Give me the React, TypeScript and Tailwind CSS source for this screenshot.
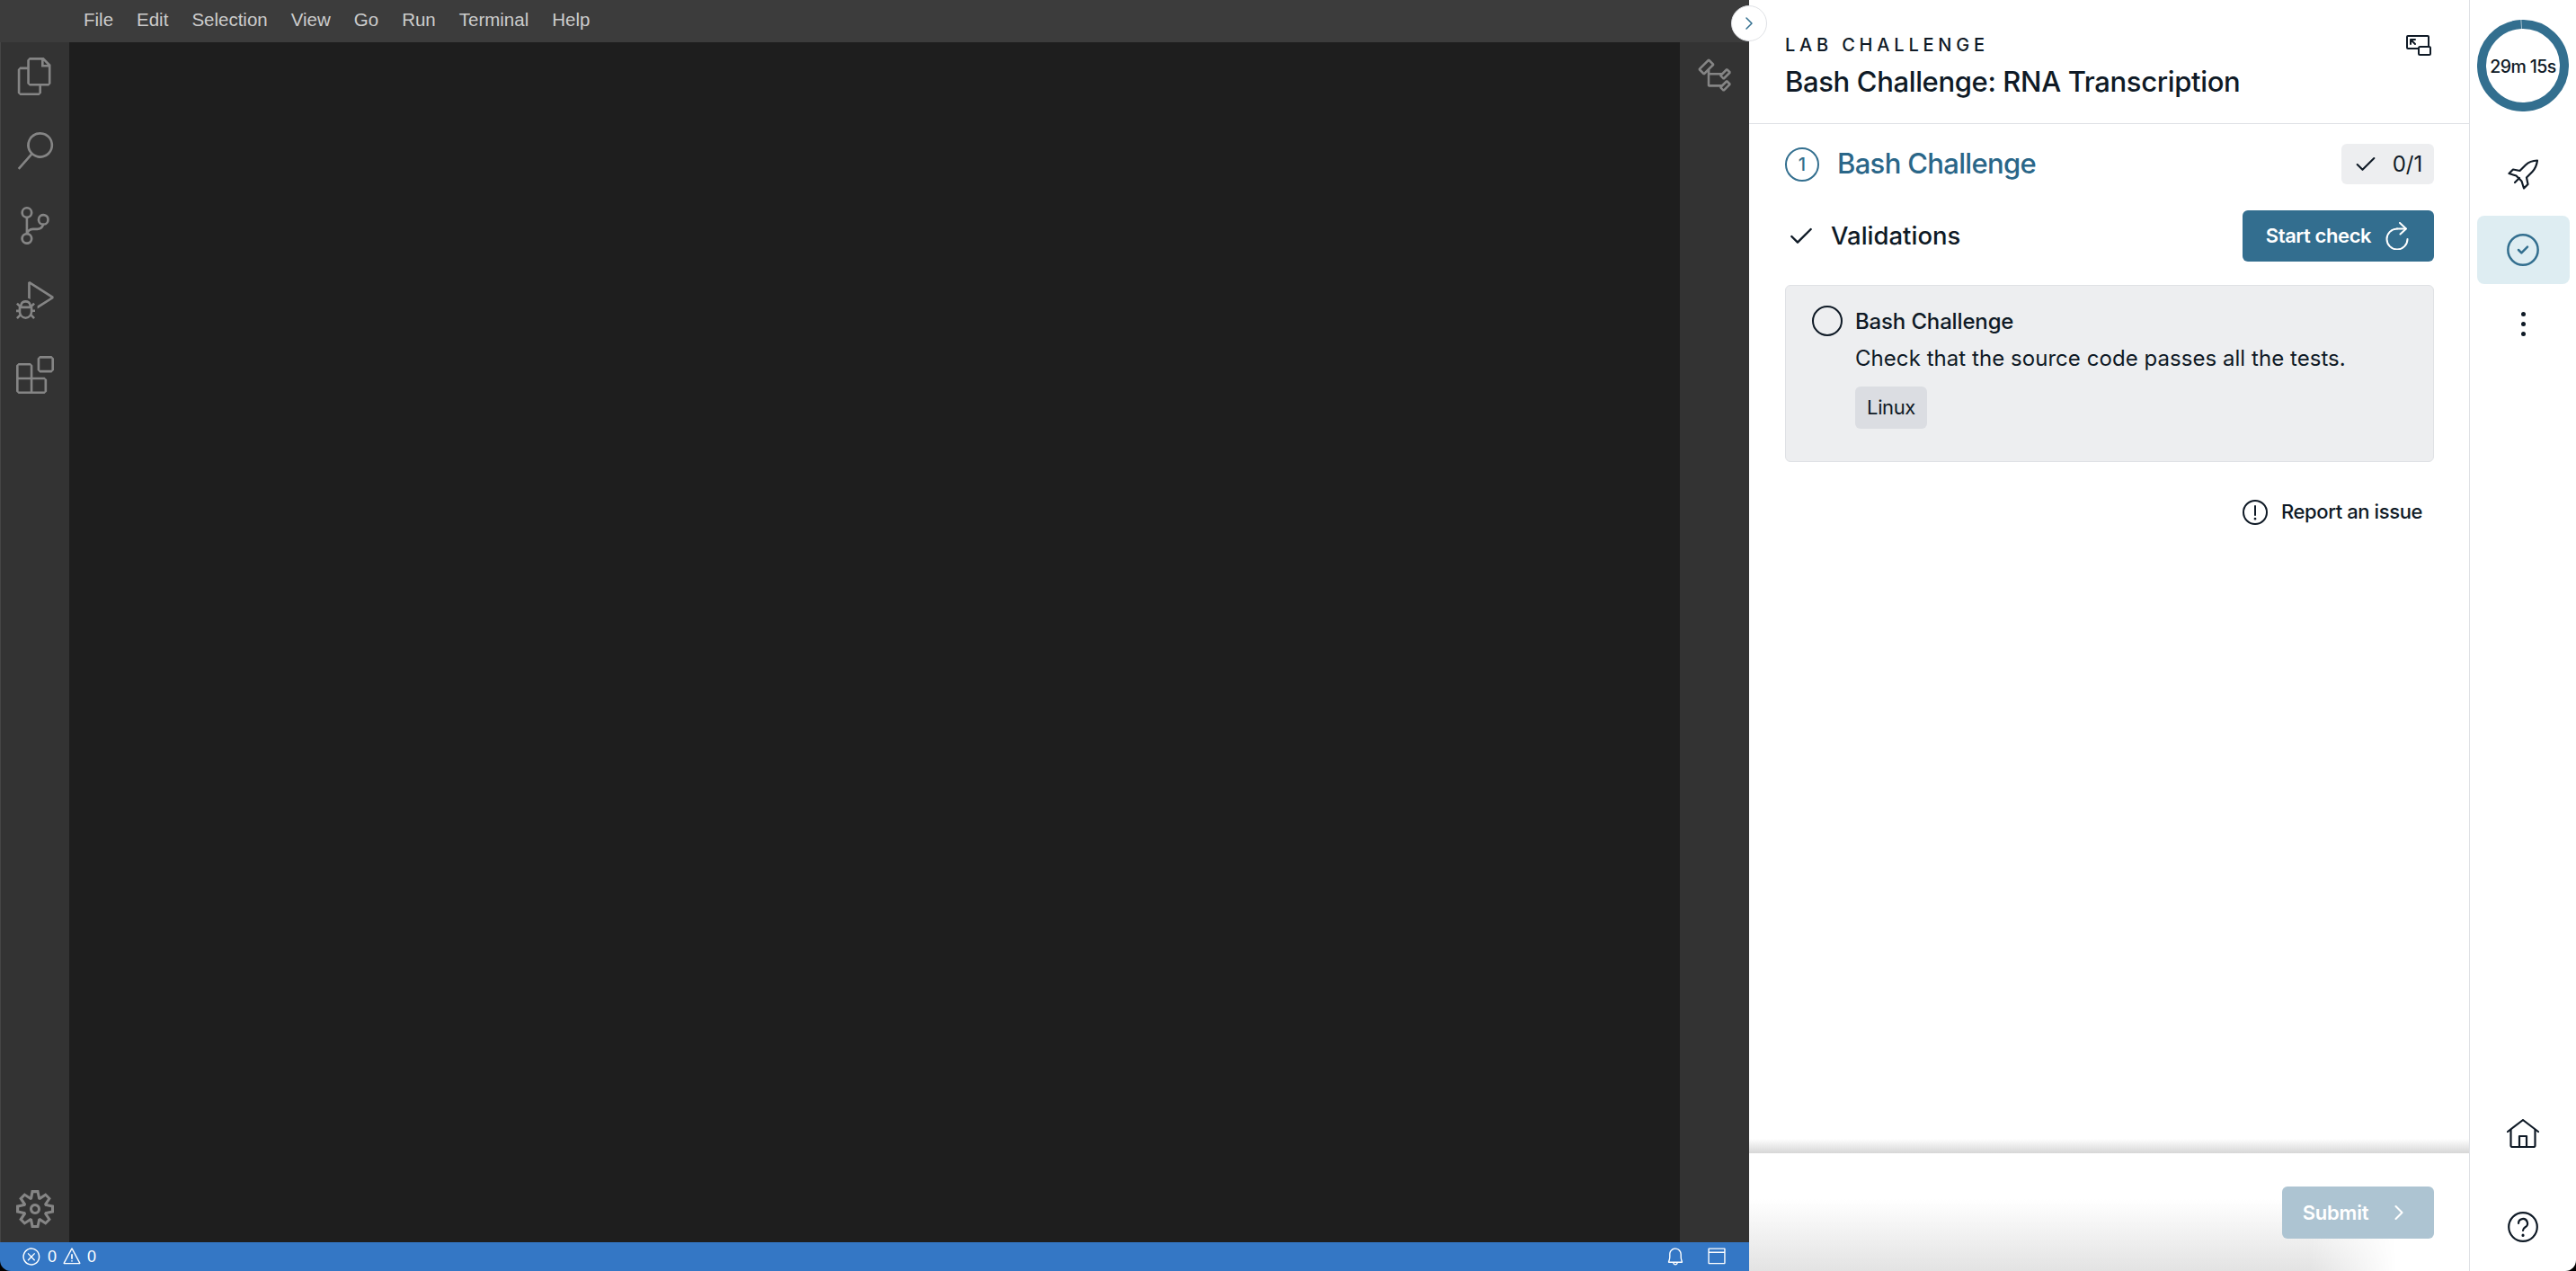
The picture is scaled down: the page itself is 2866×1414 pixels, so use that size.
import { Check, ChevronRight, CircleCheck } from "lucide-react";
import {
  VscBell,
  VscBrowser,
  VscDebugAlt,
  VscError,
  VscExtensions,
  VscFiles,
  VscSearch,
  VscSettingsGear,
  VscSourceControl,
  VscSymbolClass,
  VscWarning,
} from "react-icons/vsc";

const menuItems = ["File", "Edit", "Selection", "View", "Go", "Run", "Terminal", "Help"];

function ActivityBar() {
  return (
    <div className="flex w-[77px] shrink-0 flex-col items-center border-l border-[#454545] bg-[#333333] pb-[16px] pt-[17px] text-[#858585]">
      <div className="flex flex-col items-center gap-[41px]">
        <VscFiles size={42} />
        <VscSearch size={42} />
        <VscSourceControl size={42} />
        <VscDebugAlt size={42} />
        <VscExtensions size={42} />
      </div>
      <div className="mt-auto">
        <VscSettingsGear size={42} />
      </div>
    </div>
  );
}

function RestartIcon() {
  return (
    <svg width="26" height="31" viewBox="0 0 26 31" fill="none" stroke="currentColor" strokeWidth="2" strokeLinecap="round" strokeLinejoin="round">
      <path d="M13 7.5a11.5 11.5 0 1 0 11.5 11.5" />
      <path d="M13 7.5h9" />
      <path d="M16 1l7 6.5-6.5 6" />
    </svg>
  );
}

function ExpandIcon() {
  return (
    <svg width="28" height="23" viewBox="0 0 28 23" fill="none" stroke="#0f1a26" strokeWidth="2" strokeLinecap="round" strokeLinejoin="round">
      <path d="M14 15H2a1 1 0 0 1-1-1V2a1 1 0 0 1 1-1h22a1 1 0 0 1 1 1v10" />
      <rect x="14" y="13" width="13" height="9" rx="1.5" />
      <path d="M10 10L5 5M5 10V5h5" />
    </svg>
  );
}

function RocketIcon() {
  return (
    <svg width="34" height="34" viewBox="0 0 34 34" fill="none" stroke="#0f1a26" strokeWidth="2.2" strokeLinecap="round" strokeLinejoin="round">
      <path d="M33 1.5c-5.5.2-9.5 1.6-13 5L13.5 13 6 11.5 1.5 16l8 2.5 6 6 2.5 8 4.5-4.5-1.500-7.500 6.500-6.500c3.400-3.500 4.800-7.500 5.500-12.500z" />
      <path d="M8 26l5-5" />
    </svg>
  );
}

function HomeIcon() {
  return (
    <svg width="36" height="32" viewBox="0 0 36 32" fill="none" stroke="#0f1a26" strokeWidth="2.2" strokeLinecap="round" strokeLinejoin="round">
      <path d="M1 14L18 1l17 13" />
      <path d="M4.500 12v17.500a1.500 1.500 0 0 0 1.500 1.500h24a1.500 1.500 0 0 0 1.500-1.500V12" />
      <path d="M14 31V19h8v12" />
    </svg>
  );
}

function QuestionIcon() {
  return (
    <svg width="34" height="34" viewBox="0 0 34 34" fill="none" stroke="#0f1a26" strokeWidth="2.2" strokeLinecap="round" strokeLinejoin="round">
      <circle cx="17" cy="17" r="15.800" />
      <path d="M12 13a5 5 0 1 1 7.500 4.300c-1.600 1-2.500 1.900-2.500 3.700" />
      <path d="M17 26v.4" strokeWidth="3" />
    </svg>
  );
}

function ExclamationIcon() {
  return (
    <svg width="28" height="28" viewBox="0 0 28 28" fill="none" stroke="#0f1a26" strokeWidth="2" strokeLinecap="round">
      <circle cx="14" cy="14" r="13" />
      <path d="M14 7v10" />
      <path d="M14 21v.3" strokeWidth="2.600" />
    </svg>
  );
}

function TimerRing() {
  return (
    <div className="relative mt-[22px] flex h-[102px] w-[102px] items-center justify-center">
      <svg className="absolute inset-0" width="102" height="102" viewBox="0 0 102 102" fill="none">
        <circle cx="51" cy="51" r="46" stroke="#336f8f" strokeWidth="10" strokeDasharray="288 1.200" transform="rotate(-92 51 51)" />
      </svg>
      <span className="relative mt-[4px] text-[19.5px] font-medium tracking-[-0.6px] text-[#0f1a26]">29m 15s</span>
    </div>
  );
}

function Sidebar() {
  return (
    <div className="flex flex-1 flex-col items-center border-l border-[#dfe1e5] bg-white">
      <TimerRing />
      <div className="mt-[53px]">
        <RocketIcon />
      </div>
      <div className="mt-[29px] flex h-[76px] w-[103px] items-center justify-center rounded-[8px] bg-[#deedf2] text-[#336f8f]">
        <CircleCheck size={40} strokeWidth={1.500} />
      </div>
      <div className="mt-[31px] flex flex-col gap-[6px]">
        <span className="h-[5px] w-[5px] rounded-full bg-[#0f1a26]" />
        <span className="h-[5px] w-[5px] rounded-full bg-[#0f1a26]" />
        <span className="h-[5px] w-[5px] rounded-full bg-[#0f1a26]" />
      </div>
      <div className="mb-[32px] mt-auto flex flex-col items-center gap-[71px]">
        <HomeIcon />
        <QuestionIcon />
      </div>
    </div>
  );
}

function LabPanel() {
  return (
    <div className="flex w-[801px] shrink-0 flex-col bg-white text-[#0f1a26]">
      <div className="flex h-[138px] shrink-0 items-start justify-between border-b border-[#dfe1e5] px-[40px] pt-[38px]">
        <div>
          <div className="text-[20px] font-medium leading-[24px] tracking-[4.8px]">LAB CHALLENGE</div>
          <h1 className="mt-[9px] text-[31px] font-medium leading-[40px] tracking-[-0.36px]">Bash Challenge: RNA Transcription</h1>
        </div>
        <div className="mr-[2px] mt-[1px]">
          <ExpandIcon />
        </div>
      </div>

      <div className="flex-1 pl-[40px] pr-[39px] pt-[22px]">
        <div className="flex h-[45px] items-center justify-between">
          <div className="flex items-center gap-[20px]">
            <span className="flex h-[38px] w-[38px] items-center justify-center rounded-full border-2 border-[#336f8f] text-[20px] font-medium text-[#336f8f]">1</span>
            <span className="text-[31px] font-medium tracking-[-0.67px] text-[#2a6688]">Bash Challenge</span>
          </div>
          <div className="flex h-[45px] w-[103px] items-center justify-center gap-[16px] rounded-[6px] bg-[#edeef0] text-[24px]">
            <Check size={28} strokeWidth={1.800} />
            <span>0/1</span>
          </div>
        </div>

        <div className="mt-[29px] flex h-[57px] items-center justify-between">
          <div className="flex items-center gap-[17px] pl-[2px]">
            <Check size={32} strokeWidth={1.800} />
            <span className="text-[27.5px] font-medium">Validations</span>
          </div>
          <button type="button" className="flex h-[57px] w-[213px] items-center justify-center gap-[16px] rounded-[6px] bg-[#336e8f] pr-[2px] text-[22px] font-semibold tracking-[-0.4px] text-white">
            Start check
            <RestartIcon />
          </button>
        </div>

        <div className="mt-[26px] flex h-[197px] rounded-[6px] border border-[#dfe1e5] bg-[#edeef0] pl-[29px] pt-[22px]">
          <span className="h-[34px] w-[34px] shrink-0 rounded-full border-2 border-[#0f1a26]" />
          <div className="ml-[14px] flex flex-col items-start">
            <div className="mt-[1px] text-[24px] font-medium leading-[34px] tracking-[-0.15px]">Bash Challenge</div>
            <div className="mt-[8px] text-[24px] leading-[32px] tracking-[0.05px]">Check that the source code passes all the tests.</div>
            <div className="mt-[15px] flex h-[47px] w-[80px] items-center justify-center rounded-[6px] bg-[#dbdde2] text-[22px] tracking-[-0.4px]">Linux</div>
          </div>
        </div>

        <div className="mt-[39px] flex items-center justify-end gap-[15px] pr-[13px]">
          <ExclamationIcon />
          <span className="text-[22px] font-medium tracking-[-0.4px]">Report an issue</span>
        </div>
      </div>

      <div className="h-[16px] shrink-0 bg-gradient-to-b from-white to-[#d6d6d6]" />
      <div className="relative flex h-[131px] shrink-0 justify-end bg-white pr-[39px] pt-[37px]">
        <div className="absolute inset-x-0 bottom-0 h-[80px] bg-gradient-to-b from-white to-[#e3e3e3] [mask-image:linear-gradient(to_right,black_78%,transparent_90%)]" />
        <button type="button" className="relative flex h-[58px] w-[169px] items-center justify-center gap-[20px] rounded-[6px] bg-[#adc4d2] pr-[2px] text-[22px] font-semibold tracking-[-0.2px] text-white">
          Submit
          <ChevronRight size={28} strokeWidth={1.800} />
        </button>
      </div>
    </div>
  );
}

export default function App() {
  return (
    <div className="h-screen w-screen bg-black font-['Inter',sans-serif]">
      <div className="relative flex h-full overflow-hidden rounded-b-[12px]">
        <div className="flex w-[1946px] shrink-0 flex-col font-['Liberation_Sans',sans-serif]">
          <div className="flex h-[47px] shrink-0 items-center gap-[26px] bg-[#3c3c3c] pb-[3px] pl-[93px] text-[20.5px] text-[#cccccc]">
            {menuItems.map((item) => (
              <span key={item}>{item}</span>
            ))}
          </div>
          <div className="flex min-h-0 flex-1">
            <ActivityBar />
            <div className="flex-1 bg-[#1e1e1e]" />
            <div className="flex w-[77px] shrink-0 justify-center bg-[#333333] pt-[16px] text-[#858585]">
              <VscSymbolClass size={42} />
            </div>
          </div>
          <div className="flex h-[32px] shrink-0 items-center bg-[#3477c5] pl-[24px] pr-[25px] text-[18px] text-white">
            <VscError size={22} />
            <span className="ml-[7px]">0</span>
            <VscWarning size={22} className="ml-[6px]" />
            <span className="ml-[6px]">0</span>
            <VscBell size={22} className="ml-auto" />
            <VscBrowser size={22} className="ml-[24px]" />
          </div>
        </div>
        <LabPanel />
        <Sidebar />
        <button type="button" className="absolute left-[1926px] top-[6px] flex h-[40px] w-[40px] items-center justify-center rounded-full border border-[#dfe1e5] bg-white text-[#336f8f]">
          <ChevronRight size={24} strokeWidth={1.500} />
        </button>
      </div>
    </div>
  );
}
